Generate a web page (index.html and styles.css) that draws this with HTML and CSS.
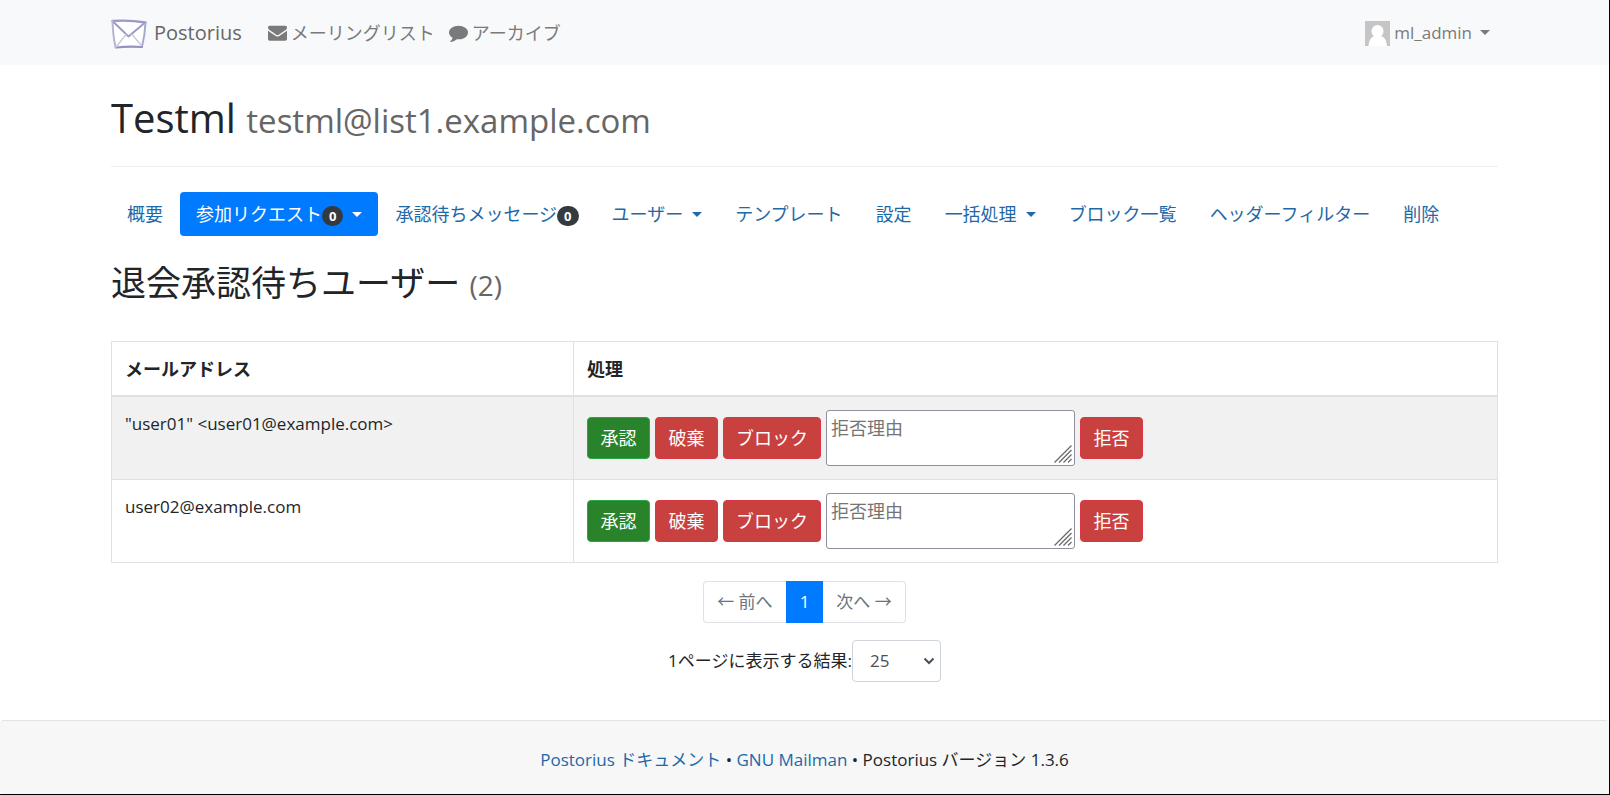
FILE: index.html
```html
<!DOCTYPE html>
<html lang="ja">
<head>
<meta charset="utf-8">
<title>Testml - Postorius</title>
<meta name="viewport" content="width=device-width, initial-scale=1">
<link rel="stylesheet" href="styles.css">
</head>
<body>
<header class="navbar">
  <div class="container navbar-inner">
    <a class="brand" href="#">
      <svg class="logo" viewBox="0 0 36 32" fill="none" stroke-linecap="round" stroke-linejoin="round" aria-hidden="true">
        <path d="M1.5 4 L34.5 5.5 L31 29.5 L5 30.5 Z" fill="#fff"/>
        <path d="M1.5 4 Q18 2.800 34.5 5.5" stroke="#9a9ac6" stroke-width="2.4"/>
        <path d="M34.5 5.5 Q34 18 31 29.5" stroke="#a9a9d0" stroke-width="2"/>
        <path d="M31 30 Q18 29 5 30.5" stroke="#9292c0" stroke-width="2.2"/>
        <path d="M1.5 4 Q2 19 4.500 30" stroke="#b4b4d8" stroke-width="2"/>
        <path d="M3 5.500 L17.500 19.500 L33 6.500" stroke="#9a9ac6" stroke-width="1.800"/>
        <path d="M5.500 29.500 L15 17.500 M30.500 28.500 L21 17.500" stroke="#c9c9da" stroke-width="1.400"/>
      </svg>
      <span>Postorius</span>
    </a>
    <nav class="main-links">
      <a class="main-link" href="#">
        <svg class="icon" viewBox="0 0 1792 1792" aria-hidden="true"><path fill="currentColor" d="M1792 710v794q0 66-47 113t-113 47H160q-66 0-113-47T0 1504V710q44 49 101 87 362 246 497 345 57 42 92.500 65.500t94.500 48 110 24.500h2q51 0 110-24.500t94.500-48T1194 1142q170-123 498-345 57-39 100-87zm0-294q0 79-49 151t-122 123q-376 261-468 325-10 7-42.500 30.500t-54 38-52 32.500-57.500 27-50 9h-2q-23 0-50-9t-57.500-27-52-32.500-54-38T639 1015q-91-64-262-182.500T172 690q-62-42-117-115.500T0 438q0-78 41.500-130T160 256h1472q65 0 112.500 47t47.500 113z"/></svg>
        <span>メーリングリスト</span>
      </a>
      <a class="main-link" href="#">
        <svg class="icon" viewBox="0 0 1792 1792" aria-hidden="true"><path fill="currentColor" d="M1792 896q0 174-120 321.500t-326 233-450 85.500q-70 0-145-8-198 175-460 242-49 14-114 22-17 2-30.500-9t-17.500-29v-1q-3-4-.5-12t2-10 4.500-9.500l6-9 7-8.500 8-9q7-8 31-34.500t34.500-38 31-39.500 32.500-51 27-59 26-76q-157-89-247.500-220T0 896q0-130 71-248.500t191-204.500 286-136.500T896 256t348 50.500T1530 443t191 204.500 71 248.500z"/></svg>
        <span>アーカイブ</span>
      </a>
    </nav>
    <button class="user-menu" type="button">
      <svg class="avatar" viewBox="0 0 25 27" aria-hidden="true"><path fill="#c5c5c5" d="M0 2h25v25H0z"/><path fill="#fff" d="M12.500 6a6 6 0 0 1 6 6c0 2.500-1 4.200-2.300 5.300 3.300.7 5.300 4 5.800 9.700H3.500c.5-5.700 2.500-9 5.500-9.700C7.500 16.200 6.500 14.500 6.500 12a6 6 0 0 1 6-6z"/></svg>
      <span>ml_admin</span>
      <span class="caret"></span>
    </button>
  </div>
</header>

<main class="container">
  <h1 class="page-title">Testml <small class="muted">testml@list1.example.com</small></h1>

  <nav class="pills">
    <a class="pill" href="#">概要</a>
    <a class="pill active" href="#">参加リクエスト<span class="badge">0</span><span class="caret"></span></a>
    <a class="pill" href="#">承認待ちメッセージ<span class="badge">0</span></a>
    <a class="pill" href="#">ユーザー<span class="caret"></span></a>
    <a class="pill" href="#">テンプレート</a>
    <a class="pill" href="#">設定</a>
    <a class="pill" href="#">一括処理<span class="caret"></span></a>
    <a class="pill" href="#">ブロック一覧</a>
    <a class="pill" href="#">ヘッダーフィルター</a>
    <a class="pill" href="#">削除</a>
  </nav>

  <h2 class="section-title">退会承認待ちユーザー <small class="muted">(2)</small></h2>

  <table class="requests">
    <thead>
      <tr><th class="col-address" scope="col">メールアドレス</th><th scope="col">処理</th></tr>
    </thead>
    <tbody>
      <tr>
        <td>"user01" &lt;user01@example.com&gt;</td>
        <td>
          <form class="actions">
            <button class="btn success" type="button">承認</button>
            <button class="btn danger" type="button">破棄</button>
            <button class="btn danger" type="button">ブロック</button>
            <span class="reason"><textarea class="reason-input" placeholder="拒否理由" aria-label="拒否理由"></textarea><svg class="grip" viewBox="0 0 18 18" aria-hidden="true"><path d="M.5 17.500l17-17M5 17.500L17.500 5M9.500 17.500l8-8M14 17.500l3.500-3.500" stroke="#6b6b6b" stroke-width="1.300"/></svg></span>
            <button class="btn danger" type="button">拒否</button>
          </form>
        </td>
      </tr>
      <tr>
        <td>user02@example.com</td>
        <td>
          <form class="actions">
            <button class="btn success" type="button">承認</button>
            <button class="btn danger" type="button">破棄</button>
            <button class="btn danger" type="button">ブロック</button>
            <span class="reason"><textarea class="reason-input" placeholder="拒否理由" aria-label="拒否理由"></textarea><svg class="grip" viewBox="0 0 18 18" aria-hidden="true"><path d="M.5 17.500l17-17M5 17.500L17.500 5M9.500 17.500l8-8M14 17.500l3.500-3.500" stroke="#6b6b6b" stroke-width="1.300"/></svg></span>
            <button class="btn danger" type="button">拒否</button>
          </form>
        </td>
      </tr>
    </tbody>
  </table>

  <nav class="pagination" aria-label="ページ">
    <a class="page" href="#">← 前へ</a>
    <a class="page current" href="#" aria-current="page">1</a>
    <a class="page" href="#">次へ →</a>
  </nav>

  <form class="page-size">
    <label for="count">1ページに表示する結果:</label>
    <span class="select-wrap">
      <select class="select" id="count"><option>25</option><option>50</option><option>100</option></select>
      <svg class="chevron" viewBox="0 0 12 8" fill="none" aria-hidden="true"><path d="M1.500 1.500L6 6l4.500-4.500" stroke="#495057" stroke-width="2"/></svg>
    </span>
  </form>
</main>

<footer class="footer">
  <p class="footer-text"><a href="#">Postorius ドキュメント</a> • <a href="#">GNU Mailman</a> • Postorius バージョン 1.3.6</p>
</footer>
</body>
</html>
```

FILE: styles.css
```css
*, *::before, *::after { box-sizing: border-box; }

body {
  margin: 0;
  min-height: 100vh;
  display: flex;
  flex-direction: column;
  border-right: 1px solid #000;
  border-bottom: 1px solid #000;
  background: #fff;
  color: #212529;
  font-family: "Open Sans", "Noto Sans CJK JP", sans-serif;
  font-size: 17px;
  line-height: 26px;
}

a { color: #1e69a8; text-decoration: none; }
button, select, textarea { font: inherit; margin: 0; }
svg { display: block; flex: none; }

.container { width: 100%; max-width: 1419px; margin: 0 auto; padding: 0 16px; }
.muted { color: #666; font-weight: 400; }

.navbar { background: #f8f9fa; }
.navbar-inner { display: flex; align-items: center; height: 65px; }
.brand { display: flex; align-items: center; gap: 7px; margin-right: 26px; color: #666; font-size: 20px; }
.logo { width: 36px; height: 32px; }
.main-links { display: flex; gap: 14px; flex: 1; font-size: 18px; }
.main-link { display: flex; align-items: center; gap: 4px; color: #7a7a7a; }
.icon { width: 19px; height: 19px; }
.user-menu { display: flex; align-items: center; gap: 4px; padding: 0; margin-right: 8px; border: 0; background: none; color: #7a7a7a; }
.avatar { width: 25px; height: 27px; }

.caret {
  display: inline-block;
  margin-left: 9px;
  vertical-align: 4px;
  border: 5px solid transparent;
  border-top-color: currentColor;
  border-bottom: 0;
}
.user-menu .caret { margin-left: 4px; }

.page-title {
  margin: 25px 0;
  padding-bottom: 21px;
  border-bottom: 1px solid #eee;
  font-size: 40px;
  line-height: 55px;
  font-weight: 400;
}
.page-title .muted { font-size: 33px; line-height: 44px; }

.pills { display: flex; flex-wrap: wrap; gap: 1px; font-size: 18px; }
.pill { padding: 9px 16px; border-radius: 4px; white-space: nowrap; }
.pill.active { background: #007bff; color: #fff; }
.badge {
  display: inline-block;
  padding: 0 7px;
  border-radius: 10px;
  background: #343a40;
  color: #fff;
  font-size: 13px;
  font-weight: 700;
  line-height: 20px;
}

.section-title { margin: 25px 0 34px; font-size: 35px; line-height: 44px; font-weight: 400; }
.section-title .muted { font-size: 28px; }

.requests { width: 100%; border-collapse: collapse; table-layout: fixed; }
.requests th, .requests td { padding: 14px 13px 13px; border: 1px solid #dee2e6; text-align: left; vertical-align: top; }
.requests th { border-bottom-width: 2px; font-size: 18px; }
.requests td:last-child { padding-top: 13px; }
.requests tbody tr:nth-child(odd) { background: #f1f1f1; }
.col-address { width: 33.3333%; }

.actions { display: flex; align-items: center; gap: 5px; font-size: 18px; }
.btn { min-width: 63px; padding: 7px 12px; border: 1px solid; border-radius: 4px; color: #fff; white-space: nowrap; }
.success { background: #28832a; border-color: #28a745; }
.danger { background: #c8413f; border-color: #dc3545; }
.reason { position: relative; width: 249px; }
.reason-input {
  display: block;
  width: 100%;
  height: 56px;
  padding: 4px;
  border: 1px solid #8f8f9d;
  border-radius: 3px;
  background: #fff;
  resize: none;
}
.reason-input::placeholder { color: #757575; opacity: 1; }
.grip { position: absolute; right: 3px; bottom: 3px; width: 18px; height: 18px; }

.pagination { display: flex; justify-content: center; margin: 18px 0 17px; }
.page { padding: 7px 13px; border: 1px solid #dee2e6; color: #6c757d; }
.page:first-child { border-right: 0; border-radius: 4px 0 0 4px; }
.page:last-child { border-left: 0; border-radius: 0 4px 4px 0; }
.page.current { background: #007bff; border-color: #007bff; color: #fff; }

.page-size { display: flex; justify-content: center; align-items: center; margin-bottom: 38px; }
.select-wrap { position: relative; }
.select {
  appearance: none;
  width: 89px;
  height: 42px;
  padding: 0 17px;
  border: 1px solid #ced4da;
  border-radius: 4px;
  background: #fff;
  color: #495057;
}
.chevron { position: absolute; right: 6px; top: 17px; width: 12px; height: 8px; }

.footer { flex: 1; border: 1px solid #e3e3e3; border-color: #e3e3e3 #f7f7f7 #f7f7f7; border-radius: 4px; background: #f7f7f7; }
.footer-text { margin: 26px 0 0; padding: 0 16px; text-align: center; }
```
